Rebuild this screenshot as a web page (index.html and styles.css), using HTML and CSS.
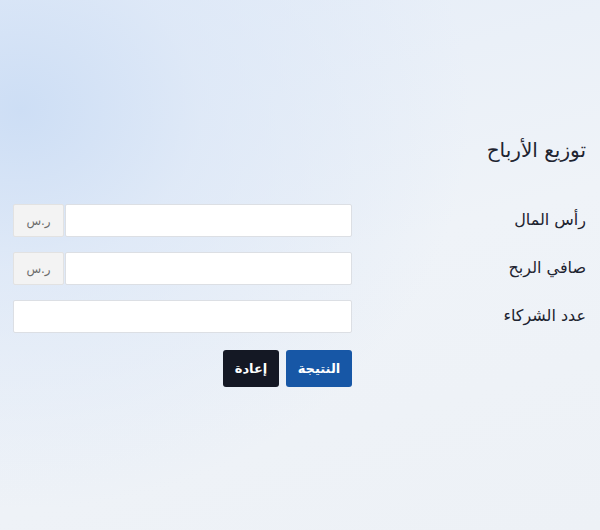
FILE: index.html
```html
<!DOCTYPE html>
<html lang="ar" dir="rtl">
<head>
    <meta charset="UTF-8">
    <meta name="viewport" content="width=device-width, initial-scale=1.0">
    <title>توزيع الأرباح</title>
    <link rel="stylesheet" href="styles.css">
</head>
<body>

    <!-- Profit distribution calculator -->
    <div class="container">
        <h1 class="title">توزيع الأرباح</h1>
        <form id="profit-form" class="calc-form">
            <div class="row">
                <label for="capital">رأس المال</label>
                <div class="input-group">
                    <input type="text" id="capital" name="capital">
                    <span class="addon">ر.س</span>
                </div>
            </div>

            <div class="row">
                <label for="profit">صافي الربح</label>
                <div class="input-group">
                    <input type="text" id="profit" name="profit">
                    <span class="addon">ر.س</span>
                </div>
            </div>

            <div class="row">
                <label for="partners">عدد الشركاء</label>
                <div class="input-group">
                    <input type="text" id="partners" name="partners">
                </div>
            </div>

            <div class="row">
                <span></span>
                <div class="actions">
                    <button type="submit" class="btn btn-primary">النتيجة</button>
                    <button type="reset" class="btn btn-dark">إعادة</button>
                </div>
            </div>
        </form>
    </div>

</body>
</html>
```

FILE: styles.css
```css
/* General Styling */
html, body {
    height: 100%;
}

body {
    font-family: "DejaVu Sans", "Noto Sans", sans-serif;
    margin: 0;
    color: #1e2430;
    background-color: #eef2f7;
    background-image:
        radial-gradient(ellipse 450px 400px at 20px 110px, #cddef5 0%, rgba(218, 230, 247, 0.7) 40%, rgba(238, 242, 247, 0) 100%),
        linear-gradient(165deg, #e5edf8 0%, #eff3f8 50%, #edf1f6 100%);
}

.container {
    padding: 136px 14px 0 13px;
}

.title {
    font-size: 20px;
    font-weight: normal;
    margin: 0 0 40px;
    line-height: 28px;
}

.calc-form {
    display: flex;
    flex-direction: column;
    gap: 15px;
}

.row {
    display: grid;
    grid-template-columns: 1fr 339px;
    align-items: center;
}

.row label {
    font-size: 16px;
    margin-top: -3px;
}

.input-group {
    display: flex;
    height: 33px;
}

.input-group input {
    flex: 1;
    min-width: 0;
    border: 1px solid #dcdfe4;
    border-radius: 2px;
    background: #ffffff;
    padding: 0 10px;
    font-size: 14px;
}

.addon {
    width: 49px;
    margin-right: 1px;
    display: flex;
    align-items: center;
    justify-content: center;
    background: #f3f3f3;
    border: 1px solid #e2e2e2;
    border-radius: 2px;
    color: #6b6b6b;
    font-size: 12px;
}

.actions {
    display: flex;
    gap: 7px;
    margin-top: 2px;
}

.btn {
    height: 37px;
    border: none;
    border-radius: 3px;
    color: #ffffff;
    font-family: inherit;
    font-size: 13px;
    font-weight: bold;
    cursor: pointer;
}

.btn-primary {
    width: 66px;
    background-color: #1757a6;
}

.btn-dark {
    width: 56px;
    background-color: #141824;
}
```
